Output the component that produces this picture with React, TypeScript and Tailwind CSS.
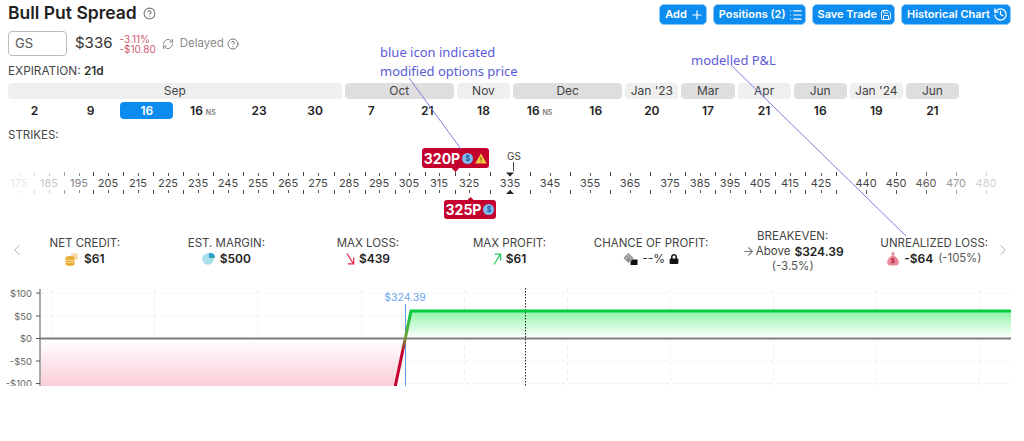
import { ArrowRight, ChevronLeft, ChevronRight, CircleHelp, History, List, Plus, RefreshCw, Save } from "lucide-react";
import { FaLock } from "react-icons/fa";
import { ReactNode } from "react";

const months = [
  { name: "Sep", span: "col-span-6", bg: "bg-[#efefef]" },
  { name: "Oct", span: "col-span-2", bg: "bg-[#dedede]" },
  { name: "Nov", span: "col-span-1", bg: "bg-[#efefef]" },
  { name: "Dec", span: "col-span-2", bg: "bg-[#dedede]" },
  { name: "Jan '23", span: "col-span-1", bg: "bg-[#efefef]" },
  { name: "Mar", span: "col-span-1", bg: "bg-[#dedede]" },
  { name: "Apr", span: "col-span-1", bg: "bg-[#efefef]" },
  { name: "Jun", span: "col-span-1", bg: "bg-[#dedede]" },
  { name: "Jan '24", span: "col-span-1", bg: "bg-[#efefef]" },
  { name: "Jun", span: "col-span-1", bg: "bg-[#dedede]" },
];

const dates = [
  { d: "2" }, { d: "9" }, { d: "16", on: true }, { d: "16", ns: true }, { d: "23" }, { d: "30" },
  { d: "7" }, { d: "21" }, { d: "18" }, { d: "16", ns: true }, { d: "16" }, { d: "20" },
  { d: "17" }, { d: "21" }, { d: "16" }, { d: "19" }, { d: "21" },
];

// strike, x position, opacity
const strikes: [number, number, number][] = [
  [175, 19, 0.12], [185, 49, 0.3], [195, 79, 0.65], [205, 108, 1], [215, 138, 1], [225, 168, 1],
  [235, 198, 1], [245, 228, 1], [255, 258, 1], [265, 288, 1], [275, 318, 1], [285, 349, 1],
  [295, 379, 1], [305, 409, 1], [315, 439, 1], [325, 469, 1], [335, 510, 1], [345, 550, 1],
  [355, 590, 1], [365, 630, 1], [375, 670, 1], [385, 700, 1], [395, 730, 1], [405, 760, 1],
  [415, 790, 1], [425, 821, 1], [440, 866, 1], [450, 896, 1], [460, 926, 0.9], [470, 956, 0.55],
  [480, 986, 0.25],
];

const midTicks: [number, number][] = [
  [34, 0.2], [64, 0.5], [93, 1], [123, 1], [153, 1], [183, 1], [213, 1], [243, 1], [273, 1], [303, 1],
  [334, 1], [365, 1], [395, 1], [425, 1], [455, 1], [490, 1], [530, 1], [570, 1], [610, 1], [650, 1],
  [685, 1], [715, 1], [745, 1], [775, 1], [805, 1], [836, 1],
];

const gridX = [51, 154, 257, 361, 464, 567, 670, 773, 876, 979];

function Btn({ children }: { children: ReactNode }) {
  return (
    <button className="h-[21px] pl-[5px] pr-[2px] flex items-center gap-[3px] rounded-[5px] bg-[#0d8cf0] border border-[#8cc8f5] text-white text-[11px] font-semibold">
      {children}
    </button>
  );
}

function Stat({ label, children }: { label: string; children: ReactNode }) {
  return (
    <div className="flex-1 flex flex-col items-center justify-center text-[11.5px] leading-[15px] text-[#444]">
      <div>{label}</div>
      {children}
    </div>
  );
}

function Coins() {
  return (
    <svg width="14" height="14" viewBox="0 0 14 14">
      <ellipse cx="9.5" cy="3" rx="3.5" ry="2" fill="#f5dcae" />
      <rect x="6" y="3" width="7" height="4.5" fill="#f5dcae" />
      <ellipse cx="5" cy="6" rx="4.5" ry="2" fill="#e8a92c" />
      <rect x="0.5" y="6" width="9" height="6" fill="#e8a92c" />
      <ellipse cx="5" cy="12" rx="4.5" ry="1.8" fill="#e8a92c" />
      <path d="M0.5 8.2h9M0.5 10.4h9" stroke="#fff3d6" strokeWidth="0.7" />
    </svg>
  );
}

function Pie() {
  return (
    <svg width="13" height="13" viewBox="0 0 13 13">
      <circle cx="6" cy="7" r="5.8" fill="#acdfee" />
      <path d="M7 1h2a4 4 0 0 1 3.8 5H7z" fill="#2a9fd0" />
      <path d="M9 3.5l3 2.5H9z" fill="#3fae6e" />
    </svg>
  );
}

function Dice() {
  return (
    <svg width="15" height="12" viewBox="0 0 15 12">
      <path d="M5.5 0l5 5-5 5-5-5z" fill="#8f8f8f" />
      <circle cx="5.5" cy="3" r="0.8" fill="#eee" />
      <circle cx="3.5" cy="5" r="0.8" fill="#eee" />
      <circle cx="7.5" cy="5" r="0.8" fill="#eee" />
      <path d="M9 6.5h5.5V12H7.5v-3z" fill="#111" />
    </svg>
  );
}

function Bag() {
  return (
    <svg width="12" height="14" viewBox="0 0 12 14">
      <path d="M4 0.5h4L7 3.5H5z" fill="#e88a9a" />
      <path d="M5 3.5h2c3 1.500 4.800 4.500 4.800 7 0 2-1.500 3-3 3H3.200c-1.500 0-3-1-3-3 0-2.500 1.800-5.500 4.800-7z" fill="#e88a9a" />
      <text x="6" y="11" textAnchor="middle" fontSize="6.5" fontWeight="700" fill="#b3123a">$</text>
    </svg>
  );
}

function LossArrow() {
  return (
    <svg width="9" height="12" viewBox="0 0 9 12" fill="none" stroke="#e0224e" strokeWidth="1.2">
      <path d="M1 0.500L7.500 11M1.800 10.800H7.700V4.500" />
    </svg>
  );
}

function ProfitArrow() {
  return (
    <svg width="9" height="12" viewBox="0 0 9 12" fill="none" stroke="#22c55e" strokeWidth="1.2">
      <path d="M1 11.500L7.500 1M1.800 1.200H7.700V7.500" />
    </svg>
  );
}

function DollarDot() {
  return (
    <span className="w-[11px] h-[11px] rounded-full bg-[#7dbbf0] flex items-center justify-center text-[7px] font-bold text-[#1e4f96] leading-none">
      $
    </span>
  );
}

function StrikeRuler() {
  return (
    <svg width="1024" height="30" viewBox="0 170 1024 30" className="block">
      {midTicks.map(([x, o]) => (
        <g key={x} stroke="#444" opacity={o}>
          <line x1={x + 0.5} y1="172" x2={x + 0.5} y2="176" />
          <line x1={x + 0.5} y1="190" x2={x + 0.5} y2="194" />
        </g>
      ))}
      {strikes.map(([s, x, o]) => (
        <g key={s} opacity={o}>
          <line x1={x + 0.5} y1={s >= 440 ? 172 : 173} x2={x + 0.5} y2="176" stroke="#555" />
          <line x1={x + 0.5} y1="190" x2={x + 0.5} y2={s >= 440 ? 194 : 193} stroke="#555" />
          <text x={x} y="187" textAnchor="middle" fontSize="11" fill="#444">{s}</text>
        </g>
      ))}
      <path d="M506 172.500h8l-4 4z" fill="#222" />
      <path d="M506 194h8l-4-4z" fill="#222" />
    </svg>
  );
}

function PnlChart() {
  return (
    <svg width="1024" height="100" viewBox="0 286 1024 100" className="block">
      <defs>
        <linearGradient id="gain" x1="0" y1="0" x2="0" y2="1">
          <stop offset="0" stopColor="#8ff5a8" />
          <stop offset="1" stopColor="#ffffff" />
        </linearGradient>
        <linearGradient id="lossFill" x1="0" y1="0" x2="0" y2="1">
          <stop offset="0" stopColor="#ffffff" />
          <stop offset="1" stopColor="#fbcdd8" />
        </linearGradient>
        <linearGradient id="payoff" x1="0" y1="385" x2="0" y2="311" gradientUnits="userSpaceOnUse">
          <stop offset="0" stopColor="#c4002f" />
          <stop offset="0.45" stopColor="#c4002f" />
          <stop offset="0.65" stopColor="#6fa33a" />
          <stop offset="1" stopColor="#00cc3c" />
        </linearGradient>
      </defs>
      {[293, 316, 361, 383.500].map((y) => (
        <line key={y} x1="41" x2="1011" y1={y} y2={y} stroke="#eeeeee" strokeDasharray="4 4" />
      ))}
      {gridX.map((x) => (
        <line key={x} x1={x + 0.5} x2={x + 0.5} y1="289" y2="386" stroke="#eeeeee" strokeDasharray="4 4" />
      ))}
      <path d="M41 339H405L395.500 386H41z" fill="url(#lossFill)" />
      <path d="M405 338L411 311H1011V338z" fill="url(#gain)" />
      {[["$100", 293], ["$50", 316], ["$0", 338.5], ["-$50", 361], ["-$100", 383.5]].map(([t, y]) => (
        <g key={t as string}>
          <text x="32" y={(y as number) + 3.500} textAnchor="end" fontSize="9.500" fill="#666">{t}</text>
          <line x1="36" x2="40" y1={y} y2={y} stroke="#555" />
        </g>
      ))}
      <line x1="40" x2="40" y1="289" y2="386" stroke="#555" />
      <line x1="40" x2="1011" y1="338.500" y2="338.500" stroke="#7d7d7d" strokeWidth="2" />
      <line x1="525.500" x2="525.500" y1="288" y2="386" stroke="#222" strokeDasharray="1.500 1.500" />
      <line x1="405.500" x2="405.500" y1="304" y2="386" stroke="#5aa2ee" />
      <path d="M394.500 390L411 311H1011" fill="none" stroke="url(#payoff)" strokeWidth="3" />
      <text x="405" y="301" textAnchor="middle" fontSize="10.500" fill="#6ea6ee">$324.39</text>
    </svg>
  );
}

export default function App() {
  return (
    <div className="relative w-[1024px] h-[441px] overflow-hidden bg-white font-['Inter',sans-serif] text-[#222]">
      <div className="h-[30px] pl-2 pr-[13px] pt-[4px] flex justify-between items-start">
        <div className="-mt-[2px] flex items-center gap-[6px]">
          <h1 className="text-[17.5px] leading-[22px] font-semibold text-[#1f1f1f]">Bull Put Spread</h1>
          <CircleHelp size={13} className="text-[#777]" />
        </div>
        <div className="flex gap-[6px]">
          <Btn>Add <Plus size={14} /></Btn>
          <Btn>Positions (2) <List size={14} /></Btn>
          <Btn>Save Trade <Save size={12} /></Btn>
          <Btn>Historical Chart <History size={15} /></Btn>
        </div>
      </div>

      <div className="h-[25px] mt-px pl-2 flex items-center">
        <div className="w-[59px] h-[25px] pl-[6px] flex items-center rounded-[4px] border border-[#bbb] text-[13px] text-[#555]">GS</div>
        <div className="ml-[8px] text-[15px] text-[#333]">$336</div>
        <div className="ml-[7px] text-[10px] leading-[10px] text-[#cf5a6f]">
          <div>-3.11%</div>
          <div>-$10.80</div>
        </div>
        <RefreshCw size={12} className="ml-[6px] text-[#888]" />
        <div className="ml-[6px] text-[11.5px] text-[#8a8a8a]">Delayed</div>
        <CircleHelp size={12} className="ml-[3px] text-[#777]" />
      </div>

      <div className="mt-[7px] pl-2 h-[16px] text-[11.8px] leading-[16px] text-[#444]">
        EXPIRATION: <span className="font-semibold text-[#333]">21d</span>
      </div>

      <div className="mt-[4px] ml-2 w-[951px] grid grid-cols-17 gap-x-[3px]">
        {months.map((m, i) => (
          <div key={i} className={`${m.span} ${m.bg} h-[16px] rounded-[4px] text-center text-[12px] leading-[16px] text-[#444]`}>
            {m.name}
          </div>
        ))}
      </div>
      <div className="mt-[3px] ml-2 w-[951px] grid grid-cols-17 gap-x-[3px]">
        {dates.map((x, i) => (
          <div
            key={i}
            className={
              x.on
                ? "h-[17px] rounded-[4px] bg-[#0d8cf0] text-white text-center text-[12px] leading-[17px] font-semibold"
                : "h-[17px] text-center text-[12px] leading-[17px] font-semibold text-[#222]"
            }
          >
            {x.d}
            {x.ns && <span className="ml-[3px] text-[7px] text-[#666] font-medium">NS</span>}
          </div>
        ))}
      </div>

      <div className="mt-[8px] pl-2 h-[16px] text-[11.5px] leading-[16px] text-[#444]">STRIKES:</div>

      <div className="relative mt-[27px]">
        <StrikeRuler />
        <div className="absolute left-[422px] top-[-22px] w-[67px] h-[20px] rounded-[3px] bg-[#c4002f] flex items-center justify-center gap-[2px] text-white text-[14px] font-bold">
          320P <DollarDot />
          <svg width="12" height="11" viewBox="0 0 12 11">
            <path d="M6 0.500L11.800 10.500H0.200z" fill="#f4c542" />
            <path d="M6 4v3.500M6 8.500v1" stroke="#7a4a00" strokeWidth="1" />
          </svg>
          <span className="absolute left-[31px] bottom-[-3px] w-[5px] h-[5px] rotate-45 bg-[#c4002f]" />
        </div>
        <div className="absolute left-[444px] top-[30px] w-[52px] h-[19px] rounded-[3px] bg-[#c4002f] flex items-center justify-center gap-[2px] text-white text-[14px] font-bold">
          325P <DollarDot />
          <span className="absolute left-[24px] top-[-2px] w-[5px] h-[5px] rotate-45 bg-[#c4002f]" />
        </div>
        <div className="absolute left-[505px] top-[-20px] w-[18px] text-center text-[10px] leading-[12px] text-[#444]">GS</div>
        <div className="absolute left-[513px] top-[-8px] w-px h-[9px] bg-[#444]" />
      </div>

      <div className="relative mt-[33px] ml-[14px] w-[991px] h-[36px] flex">
        <Stat label="NET CREDIT:">
          <div className="flex items-center gap-[5px] text-[12px] font-semibold text-[#222]"><Coins /> $61</div>
        </Stat>
        <Stat label="EST. MARGIN:">
          <div className="flex items-center gap-[5px] text-[12px] font-semibold text-[#222]"><Pie /> $500</div>
        </Stat>
        <Stat label="MAX LOSS:">
          <div className="flex items-center gap-[4px] text-[12px] font-semibold text-[#222]">
            <LossArrow /> $439
          </div>
        </Stat>
        <Stat label="MAX PROFIT:">
          <div className="flex items-center gap-[4px] text-[12px] font-semibold text-[#222]">
            <ProfitArrow /> $61
          </div>
        </Stat>
        <Stat label="CHANCE OF PROFIT:">
          <div className="flex items-center gap-[4px] text-[12px] text-[#333]">
            <Dice /> --% <FaLock size={10} className="text-[#111]" />
          </div>
        </Stat>
        <Stat label="BREAKEVEN:">
          <div className="flex items-center gap-[1px] text-[11.5px] text-[#444]">
            <ArrowRight size={13} className="text-[#777]" /> Above <span className="ml-[3px] text-[12px] font-semibold text-[#222]">$324.39</span>
          </div>
          <div className="text-[11.5px] text-[#555]">(-3.5%)</div>
        </Stat>
        <Stat label="UNREALIZED LOSS:">
          <div className="flex items-center gap-[5px] text-[11.3px] text-[#555]">
            <Bag /> <span className="text-[12px] font-semibold text-[#222]">-$64</span> (-105%)
          </div>
        </Stat>
        <ChevronLeft size={18} strokeWidth={1.25} className="absolute left-[-6px] top-[8px] text-[#aaa]" />
        <ChevronRight size={18} strokeWidth={1.25} className="absolute right-[-7px] top-[8px] text-[#aaa]" />
      </div>

      <div className="mt-[17px]">
        <PnlChart />
      </div>

      <div className="absolute left-[380px] top-[43px] text-[13px] leading-[19px] text-[#5b5bd6] font-['Noto_Sans',sans-serif]">
        blue icon indicated
        <br />
        modified options price
      </div>
      <div className="absolute left-[691px] top-[51px] text-[13px] leading-[19px] text-[#5b5bd6] font-['Noto_Sans',sans-serif]">
        modelled P&amp;L
      </div>
      <svg width="1024" height="441" className="absolute left-0 top-0 pointer-events-none">
        <line x1="409" y1="78" x2="461" y2="149" stroke="#7f7fe0" />
        <line x1="731" y1="65" x2="906" y2="236" stroke="#7f7fe0" />
      </svg>
    </div>
  );
}
